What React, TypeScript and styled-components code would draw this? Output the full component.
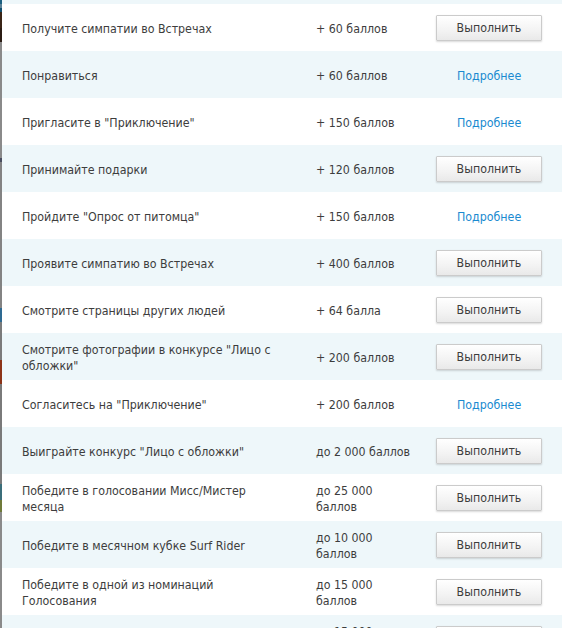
import React from 'react';
import styled, { createGlobalStyle } from 'styled-components';

interface Task {
  title: string;
  points: string;
  action: 'do' | 'more';
}

const tasks: Task[] = [
  { title: 'Получите симпатии во Встречах', points: '+ 60 баллов', action: 'do' },
  { title: 'Понравиться', points: '+ 60 баллов', action: 'more' },
  { title: 'Пригласите в "Приключение"', points: '+ 150 баллов', action: 'more' },
  { title: 'Принимайте подарки', points: '+ 120 баллов', action: 'do' },
  { title: 'Пройдите "Опрос от питомца"', points: '+ 150 баллов', action: 'more' },
  { title: 'Проявите симпатию во Встречах', points: '+ 400 баллов', action: 'do' },
  { title: 'Смотрите страницы других людей', points: '+ 64 балла', action: 'do' },
  { title: 'Смотрите фотографии в конкурсе "Лицо с обложки"', points: '+ 200 баллов', action: 'do' },
  { title: 'Согласитесь на "Приключение"', points: '+ 200 баллов', action: 'more' },
  { title: 'Выиграйте конкурс "Лицо с обложки"', points: 'до 2 000 баллов', action: 'do' },
  { title: 'Победите в голосовании Мисс/Мистер месяца', points: 'до 25 000 баллов', action: 'do' },
  { title: 'Победите в месячном кубке Surf Rider', points: 'до 10 000 баллов', action: 'do' },
  { title: 'Победите в одной из номинаций Голосования', points: 'до 15 000 баллов', action: 'do' },
  { title: 'Станьте лучшим в рейтинге', points: 'до 15 000 баллов', action: 'do' },
];

export default function App() {
  return (
    <>
      <GlobalStyle />
      <Page>
        <EdgeStrip />
        <List>
          <RowTail />
          {tasks.map((task, i) => (
            <Row key={i} $shaded={i % 2 === 1}>
              <Title>{task.title}</Title>
              <Points>{task.points}</Points>
              <ActionCell>
                {task.action === 'do' ? (
                  <DoButton>Выполнить</DoButton>
                ) : (
                  <MoreLink href="#">Подробнее</MoreLink>
                )}
              </ActionCell>
            </Row>
          ))}
        </List>
      </Page>
    </>
  );
}

const GlobalStyle = createGlobalStyle`
  html, body {
    margin: 0;
    padding: 0;
    background: #fff;
    overflow: hidden;
  }
  body {
    font-family: "DejaVu Sans Condensed", "DejaVu Sans", sans-serif;
  }
`;

const Page = styled.div`
  display: flex;
  width: 562px;
  height: 628px;
  overflow: hidden;
`;

// кусочек фоновой картинки слева
const EdgeStrip = styled.div`
  flex: 0 0 2px;
  background: linear-gradient(
    to bottom,
    #1b5f80 0px,
    #1b5f80 4px,
    #5a8096 4px,
    #5a8096 8px,
    #0f4e6e 8px,
    #0f4e6e 12px,
    #3a2517 12px,
    #3a2517 28px,
    #2b1c14 28px,
    #2b1c14 42px,
    #8a8a8a 42px,
    #8a8a8a 158px,
    #4a4e60 158px,
    #4a4e60 162px,
    #838383 162px,
    #838383 308px,
    #2e6a92 308px,
    #2e6a92 322px,
    #7b7b7b 322px,
    #7b7b7b 360px,
    #8c3418 360px,
    #8c3418 384px,
    #7a7a7a 384px,
    #7a7a7a 484px,
    #3b6e7a 484px,
    #3b6e7a 500px,
    #6f7a3a 500px,
    #6f7a3a 512px,
    #8a8a8a 512px
  );
`;

const List = styled.div`
  flex: 1;
  display: flex;
  flex-direction: column;
`;

const RowTail = styled.div`
  flex: 0 0 4px;
  background: #eef7fa;
`;

const Row = styled.div<{ $shaded: boolean }>`
  flex: 0 0 47px;
  display: grid;
  grid-template-columns: 294px 120px 1fr;
  align-items: center;
  padding-left: 20px;
  padding-top: 2px;
  box-sizing: border-box;
  background: ${(p) => (p.$shaded ? '#eef7fa' : '#fff')};
  font-size: 12.3px;
  line-height: 16px;
  color: #3d3d3d;
`;

const Title = styled.div`
  padding-right: 28px;
`;

const Points = styled.div`
  padding-right: 22px;
`;

const ActionCell = styled.div`
  display: flex;
  align-items: center;
  margin-top: -2px;
`;

const DoButton = styled.button`
  width: 106px;
  height: 26px;
  margin-top: 1px;
  padding: 0 0 1px;
  border: 1px solid #cbcbcb;
  border-radius: 1px;
  background: linear-gradient(to bottom, #ffffff 0%, #f3f3f3 60%, #e9e9e9 100%);
  box-shadow: 0 1px 2px rgba(0, 0, 0, 0.15);
  font-family: inherit;
  font-size: 12.3px;
  color: #3d3d3d;
  cursor: pointer;
`;

const MoreLink = styled.a`
  margin-left: 21px;
  margin-top: 2px;
  font-size: 12.3px;
  color: #1a8ad0;
  text-decoration: none;
`;
